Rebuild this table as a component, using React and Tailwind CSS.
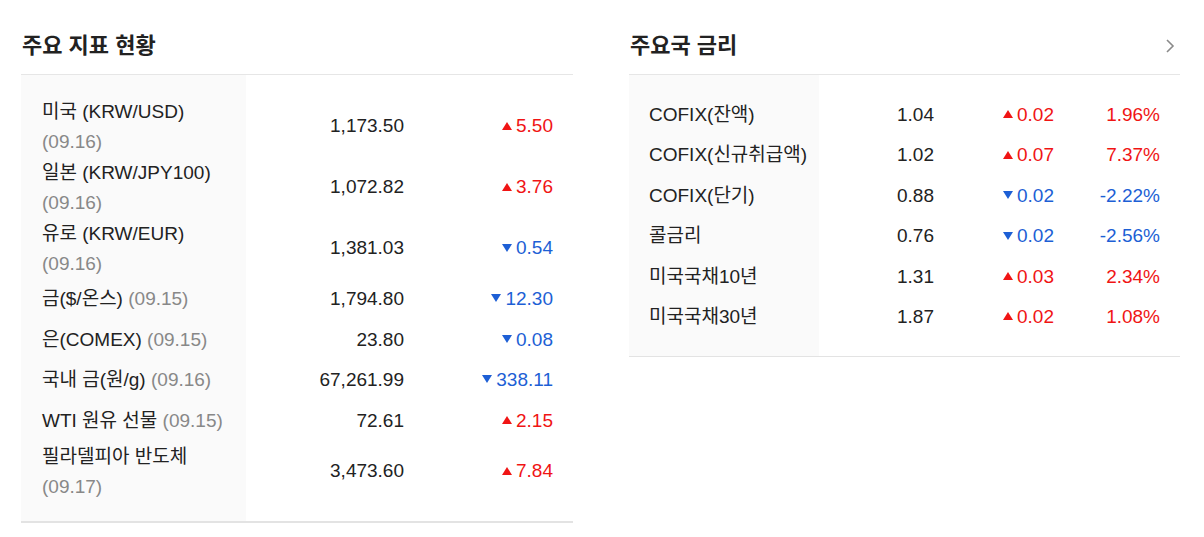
import React from 'react';

const indicators = [
    { name: '미국 (KRW/USD)', date: '(09.16)', wrap: true, value: '1,173.50', change: '5.50', up: true },
    { name: '일본 (KRW/JPY100)', date: '(09.16)', wrap: true, value: '1,072.82', change: '3.76', up: true },
    { name: '유로 (KRW/EUR)', date: '(09.16)', wrap: true, value: '1,381.03', change: '0.54', up: false },
    { name: '금($/온스)', date: '(09.15)', value: '1,794.80', change: '12.30', up: false },
    { name: '은(COMEX)', date: '(09.15)', value: '23.80', change: '0.08', up: false },
    { name: '국내 금(원/g)', date: '(09.16)', value: '67,261.99', change: '338.11', up: false },
    { name: 'WTI 원유 선물', date: '(09.15)', value: '72.61', change: '2.15', up: true },
    { name: '필라델피아 반도체', date: '(09.17)', wrap: true, value: '3,473.60', change: '7.84', up: true },
];

const rates = [
    { name: 'COFIX(잔액)', value: '1.04', change: '0.02', pct: '1.96%', up: true },
    { name: 'COFIX(신규취급액)', value: '1.02', change: '0.07', pct: '7.37%', up: true },
    { name: 'COFIX(단기)', value: '0.88', change: '0.02', pct: '-2.22%', up: false },
    { name: '콜금리', value: '0.76', change: '0.02', pct: '-2.56%', up: false },
    { name: '미국국채10년', value: '1.31', change: '0.03', pct: '2.34%', up: true },
    { name: '미국국채30년', value: '1.87', change: '0.02', pct: '1.08%', up: true },
];

function Arrow({ up }) {
    return (
        <svg width="10" height="8" viewBox="0 0 10 8" className="inline-block mr-[4px] mb-[3px]">
            {up
                ? <polygon points="5,0 10,8 0,8" fill="#f01414" />
                : <polygon points="0,0 10,0 5,8" fill="#1d5fd5" />}
        </svg>
    );
}

function Change({ up, children }) {
    return (
        <span className={up ? 'text-[#f01414]' : 'text-[#1d5fd5]'}>
            <Arrow up={up} />{children}
        </span>
    );
}

function Header({ title, more }) {
    return (
        <div className="h-[75px] border-b border-[#e6e6e6] pt-[33px] flex items-start justify-between">
            <h2 className="text-[22px] leading-[26px] font-bold text-[#222] pl-[1px]">{title}</h2>
            {more && (
                <svg width="10" height="16" viewBox="0 0 10 16" className="mt-[5px] mr-[5px]">
                    <polyline points="2,2 8,8 2,14" fill="none" stroke="#8a8a8a" strokeWidth="1.6" />
                </svg>
            )}
        </div>
    );
}

export default function App() {
    return (
        <div className="w-[1204px] h-[537px] bg-white flex gap-[56px] pl-[21px] text-[19px] text-[#222]"
            style={{ fontFamily: '"Liberation Sans", "Noto Sans CJK KR", sans-serif' }}>
            <section className="w-[552px]">
                <Header title="주요 지표 현황" />
                <div className="pt-[21px] pb-[19px] border-b-2 border-[#e3e3e3] bg-[linear-gradient(90deg,#fafafa_225px,#fff_225px)]">
                    {indicators.map((r) => (
                        <div key={r.name} className={`flex items-center ${r.wrap ? 'h-[61px]' : 'h-[40.5px]'}`}>
                            <div className="w-[225px] pl-[21px] leading-[30px]">
                                {r.name}{r.wrap ? <br /> : ' '}
                                <span className="text-[#888]">{r.date}</span>
                            </div>
                            <div className="w-[158px] text-right">{r.value}</div>
                            <div className="flex-1 text-right pr-[20px]">
                                <Change up={r.up}>{r.change}</Change>
                            </div>
                        </div>
                    ))}
                </div>
            </section>
            <section className="w-[551px]">
                <Header title="주요국 금리" more />
                <div className="pt-[20px] pb-[19px] border-b border-[#e3e3e3] bg-[linear-gradient(90deg,#fafafa_190px,#fff_190px)]">
                    {rates.map((r) => (
                        <div key={r.name} className="flex items-center h-[40.4px]">
                            <div className="w-[190px] pl-[20px]">{r.name}</div>
                            <div className="w-[115px] text-right">{r.value}</div>
                            <div className="w-[120px] text-right">
                                <Change up={r.up}>{r.change}</Change>
                            </div>
                            <div className={`flex-1 text-right pr-[20px] ${r.up ? 'text-[#f01414]' : 'text-[#1d5fd5]'}`}>
                                {r.pct}
                            </div>
                        </div>
                    ))}
                </div>
            </section>
        </div>
    );
}
